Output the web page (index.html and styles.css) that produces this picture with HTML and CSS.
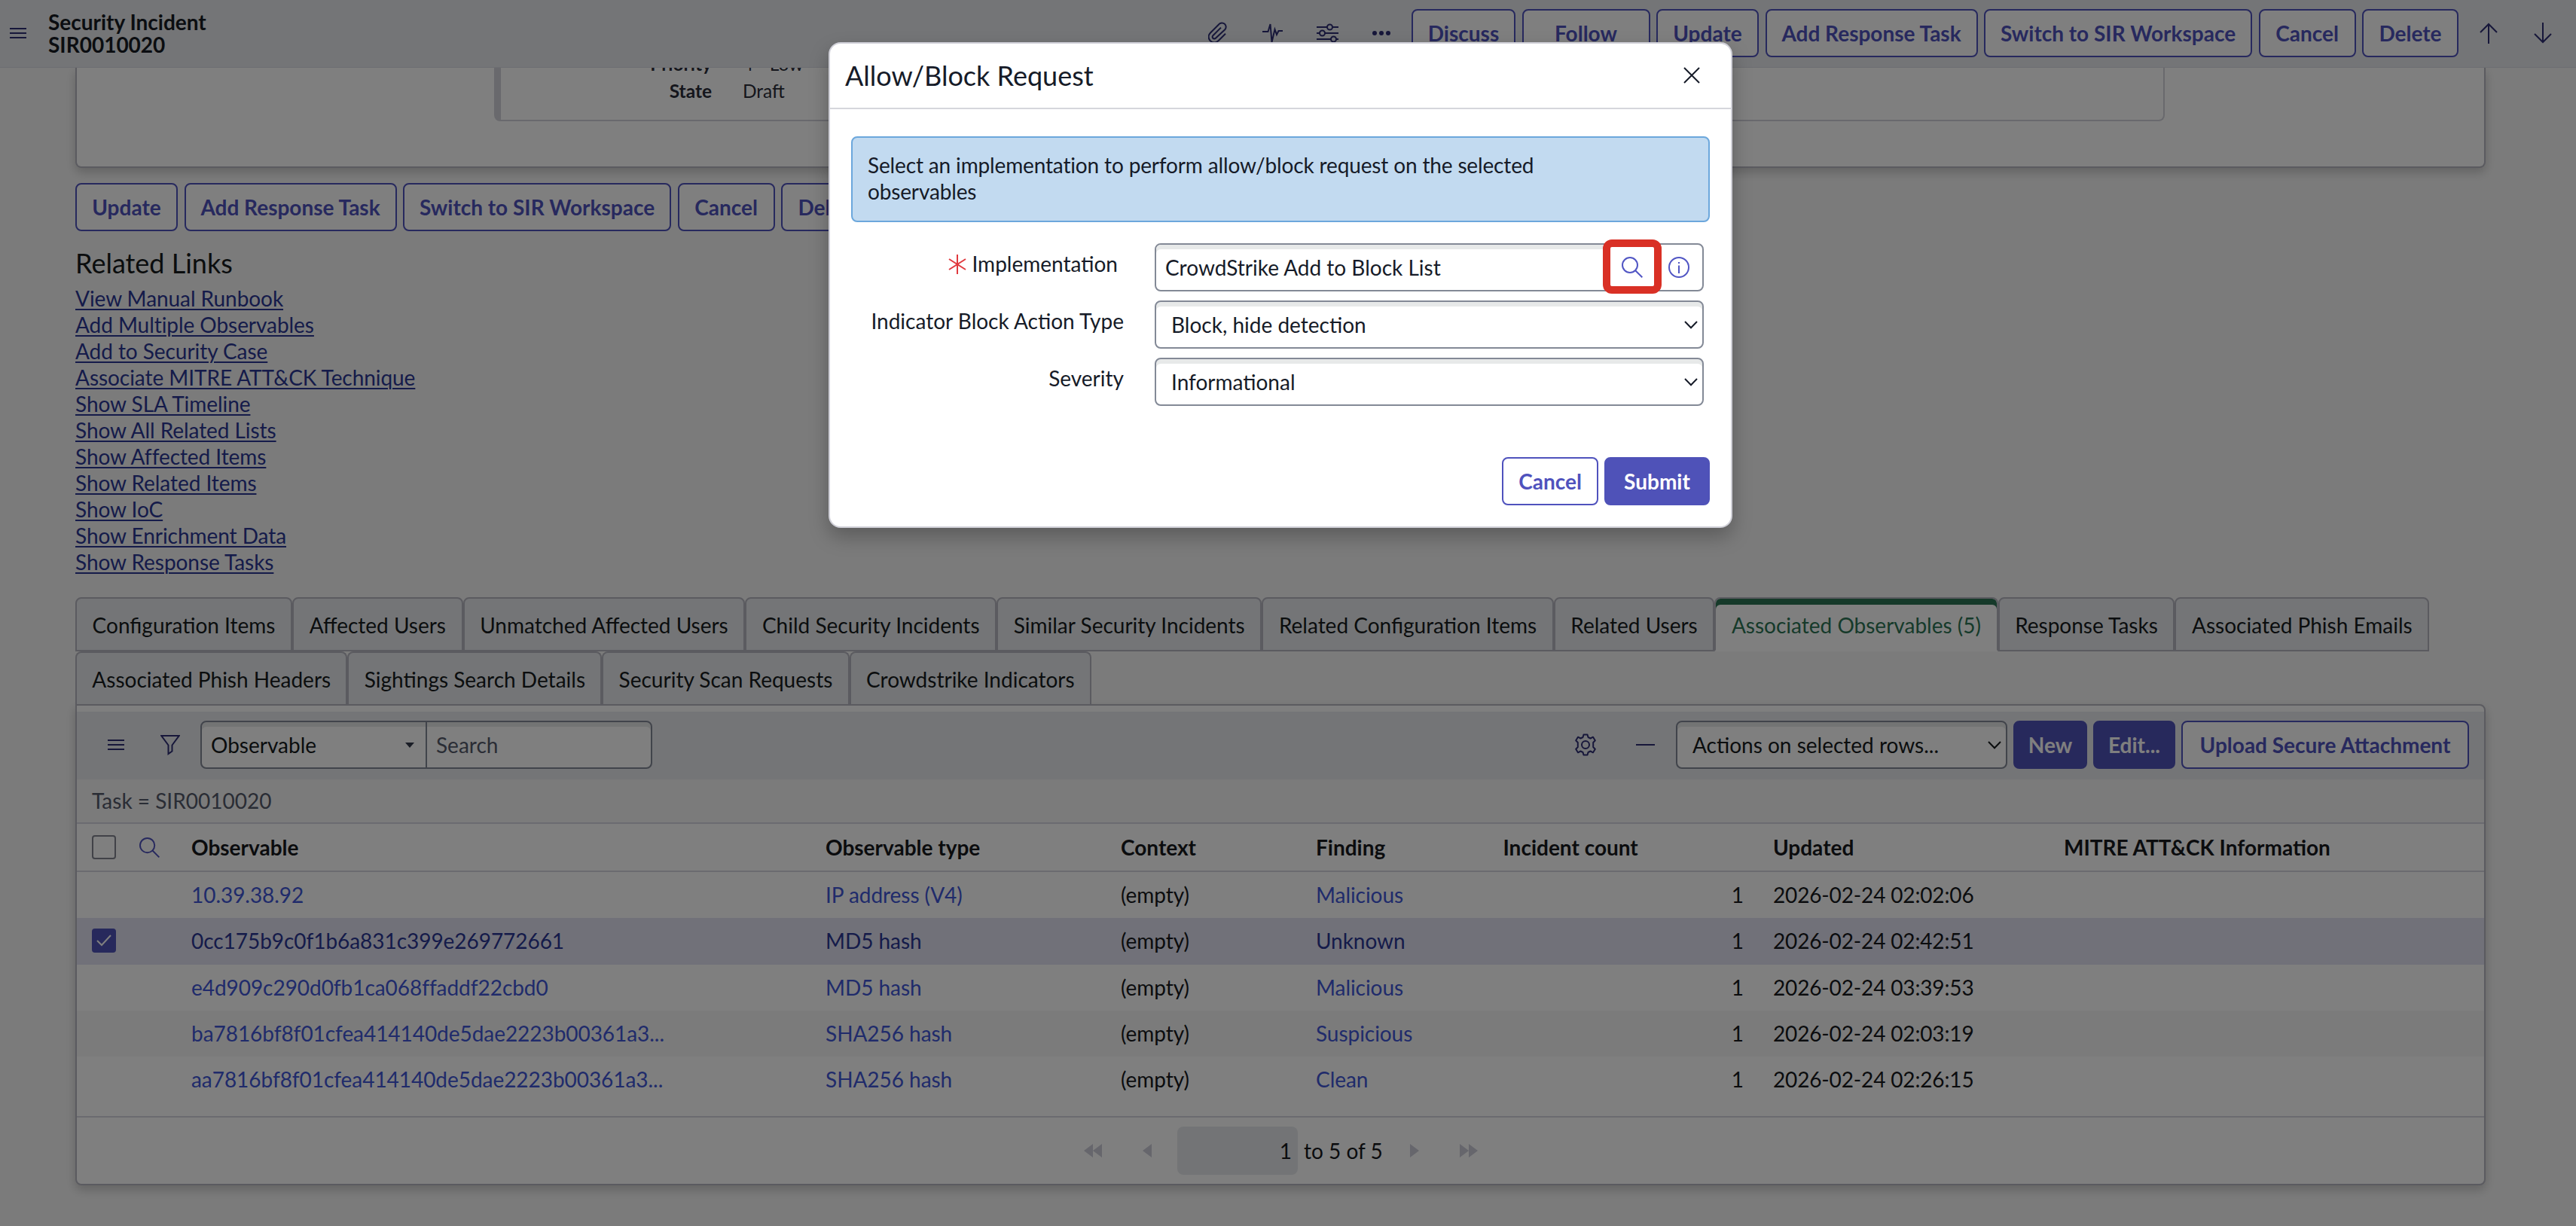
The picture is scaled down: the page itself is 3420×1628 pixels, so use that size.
FILE: index.html
```html
<!DOCTYPE html>
<html lang="en">
<head>
<meta charset="utf-8">
<title>Security Incident SIR0010020</title>
<link rel="stylesheet" href="styles.css">
</head>
<body>
<svg class="defs" aria-hidden="true">
  <symbol id="menu" viewBox="0 0 22 16"><path d="M0 2H22M0 8H22M0 14H22" fill="none" stroke="currentColor" stroke-width="2"/></symbol>
  <symbol id="search" viewBox="0 0 28 28"><g fill="none" stroke="currentColor" stroke-width="2"><circle cx="11" cy="11" r="10"/><path d="M18.200 18.200L27.300 27.300"/></g></symbol>
  <symbol id="chevron" viewBox="0 0 18 11"><path d="M1 1L9 9.2L17 1" fill="none" stroke="currentColor" stroke-width="2"/></symbol>
</svg>
<div class="page">
  <header class="topbar">
    <svg class="ico menu" width="22" height="16"><use href="#menu"/></svg>
    <h1 class="record">Security Incident<br>SIR0010020</h1>
    <div class="tools">
      <svg class="ico" width="28" height="30" viewBox="1.500 0 22.400 24"><path d="M19.900 12.600L12.250 20.240a6 6 0 0 1-8.490-8.490l9.190-9.190a4 4 0 0 1 6.400 5.660l-9.940 9.190a2 2 0 0 1-2.830-2.830l8.490-8.480" fill="none" stroke="currentColor" stroke-width="1.600"/></svg>
      <svg class="ico" width="28" height="30" viewBox="0 0 28 30"><path d="M0 13H7.500L10.500 3L12.500 27L16.500 10L19 17L21.500 12H27" fill="none" stroke="currentColor" stroke-width="2"/></svg>
      <svg class="ico" width="30" height="30" viewBox="0 0 30 30"><g fill="none" stroke="currentColor" stroke-width="2"><path d="M0 7H14M21 7H29M0 15H4M11 15H29M0 23H19M26 23H29"/><circle cx="17.500" cy="7" r="3.500"/><circle cx="7.500" cy="15" r="3.500"/><circle cx="22.500" cy="23" r="3.500"/></g></svg>
      <svg class="ico" width="24" height="6" viewBox="0 0 24 6"><g fill="currentColor"><circle cx="3" cy="3" r="3"/><circle cx="12" cy="3" r="3"/><circle cx="21" cy="3" r="3"/></g></svg>
    </div>
    <div class="actions">
      <button class="btn w-discuss">Discuss</button>
      <button class="btn w-follow">Follow</button>
      <button class="btn w-update">Update</button>
      <button class="btn w-add">Add Response Task</button>
      <button class="btn w-switch">Switch to SIR Workspace</button>
      <button class="btn w-cancel">Cancel</button>
      <button class="btn w-delete">Delete</button>
    </div>
    <div class="arrows">
      <svg class="ico" width="24" height="28" viewBox="0 0 24 28"><path d="M12 28V2M1 13L12 2L23 13" fill="none" stroke="currentColor" stroke-width="2"/></svg>
      <svg class="ico" width="24" height="28" viewBox="0 0 24 28"><path d="M12 0V26M1 15L12 26L23 15" fill="none" stroke="currentColor" stroke-width="2"/></svg>
    </div>
  </header>

  <main class="content">
    <section class="card form-card">
      <dl class="summary">
        <dt>Priority</dt><dd>4 - Low</dd>
        <dt>State</dt><dd>Draft</dd>
      </dl>
    </section>
    <div class="actions form-actions">
      <button class="btn w-update">Update</button>
      <button class="btn w-add">Add Response Task</button>
      <button class="btn w-switch">Switch to SIR Workspace</button>
      <button class="btn w-cancel">Cancel</button>
      <button class="btn w-delete">Delete</button>
    </div>
    <h2 class="links-title">Related Links</h2>
    <ul class="links">
      <li><a>View Manual Runbook</a></li>
      <li><a>Add Multiple Observables</a></li>
      <li><a>Add to Security Case</a></li>
      <li><a>Associate MITRE ATT&amp;CK Technique</a></li>
      <li><a>Show SLA Timeline</a></li>
      <li><a>Show All Related Lists</a></li>
      <li><a>Show Affected Items</a></li>
      <li><a>Show Related Items</a></li>
      <li><a>Show IoC</a></li>
      <li><a>Show Enrichment Data</a></li>
      <li><a>Show Response Tasks</a></li>
    </ul>
    <nav class="tabs">
      <span class="tab">Configuration Items</span><span class="tab">Affected Users</span><span class="tab">Unmatched Affected Users</span><span class="tab">Child Security Incidents</span><span class="tab">Similar Security Incidents</span><span class="tab">Related Configuration Items</span><span class="tab">Related Users</span><span class="tab active">Associated Observables (5)</span><span class="tab">Response Tasks</span><span class="tab">Associated Phish Emails</span>
    </nav>
    <nav class="tabs second">
      <span class="tab">Associated Phish Headers</span><span class="tab">Sightings Search Details</span><span class="tab">Security Scan Requests</span><span class="tab">Crowdstrike Indicators</span>
    </nav>
    <section class="card list">
      <div class="toolbar">
        <svg class="ico" width="22" height="16"><use href="#menu"/></svg>
        <svg class="ico funnel" width="26" height="28" viewBox="0 0 26 28"><path d="M1.300 2H24.700L15.500 14.500V22.500L10.500 26V14.500Z" fill="none" stroke="currentColor" stroke-width="2"/></svg>
        <div class="field pick"><span>Observable</span><i class="caret"></i></div>
        <div class="field query">Search</div>
        <svg class="ico gear" width="30" height="30" viewBox="0 0 30 30"><g fill="none" stroke="currentColor" stroke-width="2" stroke-linejoin="round"><path d="M12.500 1.500H17.500L18.500 5L21.500 6.500L25 4.700L27.800 9.300L25.200 12V18L27.800 20.700L25 25.300L21.500 23.500L18.500 25L17.500 28.500H12.500L11.500 25L8.500 23.500L5 25.300L2.200 20.700L4.800 18V12L2.200 9.300L5 4.700L8.500 6.500L11.500 5Z"/><circle cx="15" cy="15" r="5"/></g></svg>
        <i class="minus"></i>
        <div class="field rows-action"><span>Actions on selected rows...</span><svg width="18" height="11"><use href="#chevron"/></svg></div>
        <button class="btn solid w-new">New</button>
        <button class="btn solid w-edit">Edit...</button>
        <button class="btn w-upload">Upload Secure Attachment</button>
      </div>
      <div class="crumb">Task = SIR0010020</div>
      <div class="row head"><i class="check"></i><svg class="find" width="27" height="27"><use href="#search"/></svg><b>Observable</b><b>Observable type</b><b>Context</b><b>Finding</b><b>Incident count</b><b>Updated</b><b>MITRE ATT&amp;CK Information</b></div>
      <div class="row"><i></i><i></i><a>10.39.38.92</a><a>IP address (V4)</a><span>(empty)</span><a>Malicious</a><span class="num">1</span><span>2026-02-24 02:02:06</span></div>
      <div class="row selected"><i class="check on"><svg width="22" height="18" viewBox="0 0 22 18"><path d="M2 9L8 15L20 2" fill="none" stroke="currentColor" stroke-width="2"/></svg></i><i></i><a>0cc175b9c0f1b6a831c399e269772661</a><a>MD5 hash</a><span>(empty)</span><a>Unknown</a><span class="num">1</span><span>2026-02-24 02:42:51</span></div>
      <div class="row"><i></i><i></i><a>e4d909c290d0fb1ca068ffaddf22cbd0</a><a>MD5 hash</a><span>(empty)</span><a>Malicious</a><span class="num">1</span><span>2026-02-24 03:39:53</span></div>
      <div class="row odd"><i></i><i></i><a>ba7816bf8f01cfea414140de5dae2223b00361a3...</a><a>SHA256 hash</a><span>(empty)</span><a>Suspicious</a><span class="num">1</span><span>2026-02-24 02:03:19</span></div>
      <div class="row"><i></i><i></i><a>aa7816bf8f01cfea414140de5dae2223b00361a3...</a><a>SHA256 hash</a><span>(empty)</span><a>Clean</a><span class="num">1</span><span>2026-02-24 02:26:15</span></div>
      <div class="pager">
        <svg class="first" width="24" height="18" viewBox="0 0 24 18"><path d="M12 0V18L0 9ZM24 0V18L12 9Z" fill="currentColor"/></svg>
        <svg class="prev" width="12" height="18" viewBox="0 0 12 18"><path d="M12 0V18L0 9Z" fill="currentColor"/></svg>
        <span class="page-no">1</span>
        <span class="total">to 5 of 5</span>
        <svg class="next" width="12" height="18" viewBox="0 0 12 18"><path d="M0 0V18L12 9Z" fill="currentColor"/></svg>
        <svg width="24" height="18" viewBox="0 0 24 18"><path d="M0 0V18L12 9ZM12 0V18L24 9Z" fill="currentColor"/></svg>
      </div>
    </section>
  </main>
</div>

<div class="backdrop">
  <div class="modal">
    <div class="modal-head">
      <h2>Allow/Block Request</h2>
      <svg width="22" height="22" viewBox="0 0 22 22"><path d="M1 1L21 21M21 1L1 21" fill="none" stroke="currentColor" stroke-width="2"/></svg>
    </div>
    <div class="modal-body">
      <div class="notice">Select an implementation to perform allow/block request on the selected<br>observables</div>
      <div class="form-row">
        <label class="required"><svg width="24" height="26" viewBox="0 0 24 26"><path d="M12 0V26M1 6L23 20M23 6L1 20" fill="none" stroke="currentColor" stroke-width="2"/></svg>Implementation</label>
        <div class="lookup">
          <div class="lookup-text">CrowdStrike Add to Block List</div>
          <svg class="lens" width="28" height="28"><use href="#search"/></svg>
          <svg class="info" width="28" height="28" viewBox="0 0 28 28"><g fill="none" stroke="currentColor" stroke-width="2"><circle cx="14" cy="14" r="13"/><path d="M14 11.500V22M14 7V9"/></g></svg>
          <span class="highlight"></span>
        </div>
      </div>
      <div class="form-row">
        <label>Indicator Block Action Type</label>
        <div class="field choice"><span>Block, hide detection</span><svg width="18" height="11"><use href="#chevron"/></svg></div>
      </div>
      <div class="form-row">
        <label>Severity</label>
        <div class="field choice"><span>Informational</span><svg width="18" height="11"><use href="#chevron"/></svg></div>
      </div>
      <div class="modal-foot">
        <button class="btn w-mcancel">Cancel</button>
        <button class="btn solid w-submit">Submit</button>
      </div>
    </div>
  </div>
</div>
</body>
</html>
```
FILE: styles.css
```css
* { box-sizing: border-box; }
body { margin: 0; background: #f7f7f7; color: #161b1c; font: 28px/34px Lato, "Open Sans", sans-serif; }
h1, h2, ul, dl, dd { margin: 0; padding: 0; }
i { font-style: normal; }
.defs { position: absolute; width: 0; height: 0; }
.page { width: 3420px; height: 1628px; overflow: hidden; display: flex; flex-direction: column; }
svg { flex: none; display: block; }
.ico { color: #2e2e74; }

.topbar { flex: none; height: 90px; display: flex; align-items: center; padding: 0 32px 2px 13px; background: #e8ebef; border-bottom: 1px solid #dadde4; }
.record { margin-left: 29px; font-size: 28px; line-height: 30px; font-weight: 700; color: #161b22; }
.tools { margin-left: auto; display: flex; align-items: center; gap: 44px; width: 270px; }
.actions { display: flex; gap: 8.500px; }
.arrows { display: flex; gap: 48px; margin-left: 28px; }
.btn { flex: none; height: 64px; padding: 0; border: 2px solid #4f52bd; border-radius: 8px; background: #fff; color: #4f52bd; font: bold 28px/34px Lato, "Open Sans", sans-serif; text-align: center; white-space: nowrap; }
.solid { background: #4f52b8; border-color: #4f52b8; color: #fff; }
.w-discuss { width: 138px; }
.w-follow { width: 170px; }
.w-update { width: 136px; }
.w-add { width: 282px; }
.w-switch { width: 356px; }
.w-cancel { width: 129px; }
.w-delete { width: 128px; }
.w-new { width: 98px; }
.w-edit { width: 109px; margin-left: 8px; }
.w-upload { width: 382px; margin-left: 8px; }
.w-mcancel { width: 128px; }
.w-submit { width: 140px; }

.content { padding: 0 120px 0 100px; }
.card { background: #fff; border: 2px solid #b6b6c0; border-radius: 8px; box-shadow: 0 6px 14px rgba(0,0,0,.2); }
.form-card { height: 133px; border-top: 0; border-radius: 0 0 8px 8px; clip-path: inset(0 -20px -30px -20px); display: flex; }
.summary { margin-left: 554px; width: 2218px; height: 71px; border: 2px solid #d2d2da; border-top: 0; border-left: 9px solid #d2d2da; border-radius: 0 0 8px 8px; overflow: hidden; display: grid; grid-template-columns: 280px auto; grid-auto-rows: 36px; column-gap: 41px; align-content: end; padding-bottom: 20px; font-size: 24.500px; line-height: 36px; color: #2b2d38; }
.summary dt { font-weight: bold; text-align: right; }
.form-actions { margin-top: 20px; }
.links-title { margin-top: 22px; font-size: 36px; line-height: 40px; font-weight: 400; }
.links { list-style: none; margin-top: 10px; line-height: 35px; color: #2b3794; letter-spacing: -.06px; }
.links a { text-decoration: underline; text-decoration-thickness: 2px; text-underline-offset: 3px; }

.tabs { display: flex; height: 72px; margin-top: 29px; }
.tabs.second { margin-top: 0; height: 70px; }
.tab { flex: none; padding: 15px 20.600px 0; border: 2px solid #b6b6c0; border-radius: 8px 8px 0 0; background: #e8ebef; line-height: 40px; white-space: nowrap; }
.second .tab { border-bottom: 0; padding-left: 20.300px; padding-right: 20.300px; }
.tab.active { background: #fff; border-bottom-color: #fff; box-shadow: inset 0 8px #2c7555; color: #2c7555; }

.list { height: 639px; border-top-left-radius: 0; display: flex; flex-direction: column; padding-top: 8px; overflow: hidden; }
.toolbar { flex: none; height: 90px; padding: 0 20px 2px 41px; background: #e8ebef; display: flex; align-items: center; }
.funnel { margin-left: 48px; }
.field { height: 64px; border: 2px solid #838996; border-radius: 8px; background: #fff; box-shadow: inset 0 6px #e7e9e9; display: flex; align-items: center; justify-content: space-between; white-space: nowrap; }
.pick { width: 301px; margin-left: 27px; border-radius: 8px 0 0 8px; padding: 0 15px 0 12px; }
.query { width: 301px; margin-left: -2px; border-radius: 0 8px 8px 0; padding: 0 12px; color: #555a6b; }
.caret { border: 6px solid transparent; border-top: 7px solid #343a4c; border-bottom: 0; }
.gear { margin-left: auto; }
.minus { width: 25px; height: 2px; background: #2e2e74; margin: 0 28px 0 52px; }
.rows-action { width: 440px; padding: 0 6px 0 20px; margin-right: 8px; }
.crumb { flex: none; height: 59px; padding: 11px 20px; background: #f7f7f7; border-bottom: 2px solid #d6d6e0; color: #555a6b; }
.row { flex: none; height: 61px; display: grid; grid-template-columns: 62.500px 69.500px 842px 392px 259px 248.500px 358.500px 386px auto; padding-left: 20px; align-items: center; color: #16181c; padding-bottom: 2px; letter-spacing: -.05px; }
.head { height: 64px; padding-bottom: 0; border-bottom: 2px solid #d6d6e0; letter-spacing: 0; }
.row a { color: #4056d6; }
.row .num { padding-right: 39px; text-align: right; }
.row .num + span { letter-spacing: -.15px; }
.selected { height: 62px; background: #e3e3f3; }
.row.selected a { color: #2b3794; }
.odd { background: #f7f7f7; }
.check { width: 32px; height: 32px; border: 2px solid #838590; border-radius: 4px; background: #fff; }
.check.on { background: #4f52b8; border-color: #4f52b8; color: #fff; display: grid; place-items: center; }
.find { color: #4f52bd; }
.pager { flex: none; height: 90px; margin-top: 18px; border-top: 2px solid #d6d6e0; display: flex; align-items: center; padding-left: 1337px; color: #ccccd8; }
.prev { margin-left: 54px; }
.page-no { width: 160px; height: 64px; margin-left: 34px; border-radius: 8px; background: #e6e9ec; color: #16181c; line-height: 64px; text-align: right; padding-right: 8px; }
.total { margin-left: 8px; color: #16181c; width: 104px; white-space: nowrap; }
.next { margin: 0 54px 0 37px; }

.backdrop { position: absolute; inset: 0; height: 1628px; background: rgba(0,0,0,.5); display: flex; justify-content: center; align-items: flex-start; padding: 56px 20px 0 0; }
.modal { width: 1200px; height: 645px; border: 2px solid #d0d0d8; border-radius: 16px; background: #fff; box-shadow: 0 12px 26px rgba(0,0,0,.25); color: #161b28; }
.modal-head { height: 87px; border-bottom: 2px solid #d5d6dc; display: flex; align-items: center; justify-content: space-between; padding: 0 41px 1px 20px; }
.modal-head h2 { font-size: 36px; line-height: 44px; font-weight: 400; }
.modal-body { padding: 36px 28px 0; }
.notice { height: 114px; padding: 19px 20px; border: 2px solid #6ca7dc; border-radius: 8px; background: #c2daf0; line-height: 35px; margin-bottom: 28px; letter-spacing: -.15px; }
.form-row { display: flex; height: 64px; margin-bottom: 12px; }
.form-row label { width: 362px; margin-right: 41px; text-align: right; line-height: 40px; padding-top: 7px; }
.form-row .required { padding-right: 8px; display: flex; justify-content: flex-end; align-items: flex-start; }
.required svg { color: #e0393e; margin: 8px 7px 0 0; }
.choice { width: 729px; padding: 0 6px 0 20px; }
.lookup { position: relative; width: 729px; border: 2px solid #838996; border-radius: 8px; display: flex; align-items: center; color: #5156c4; }
.lookup-text { width: 597px; height: 60px; padding-left: 12px; line-height: 60px; box-shadow: inset 0 6px #e7e9e9; border-radius: 6px 0 0 6px; color: #161b28; }
.lens { margin-left: 21px; }
.info { margin-left: 34px; }
.highlight { position: absolute; left: 593px; top: -7px; width: 78px; height: 72px; border: 10px solid #d93025; border-radius: 12px; }
.modal-foot { display: flex; justify-content: flex-end; gap: 8px; margin-top: 68px; }
```
